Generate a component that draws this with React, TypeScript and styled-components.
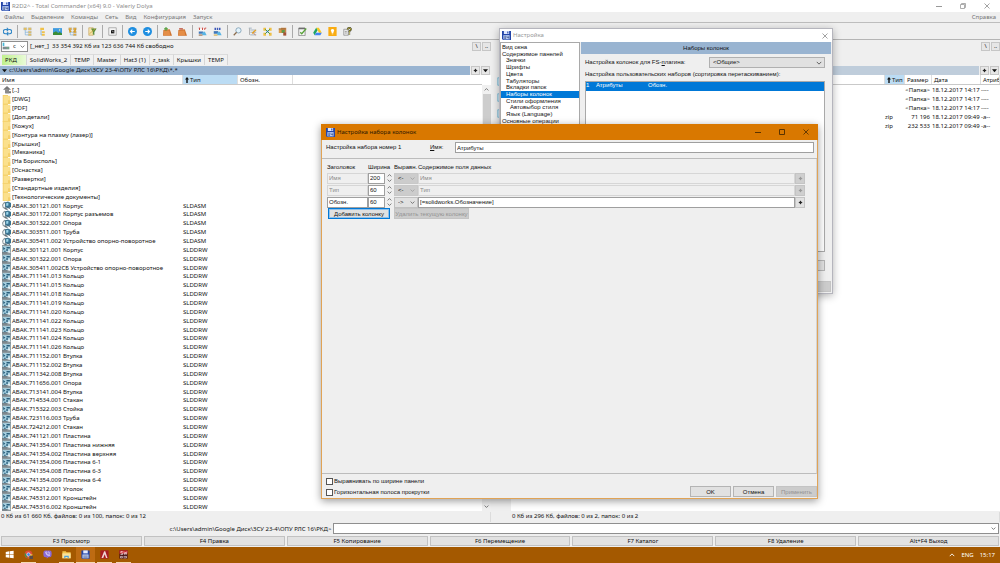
import React from "react";
import styled, { createGlobalStyle, css } from "styled-components";

const ui = `"Noto Sans", "Open Sans", sans-serif`;
const dlg = `"Liberation Sans", Arial, sans-serif`;

const GlobalStyle = createGlobalStyle`
  * { box-sizing: border-box; }
  html, body, #root { height: 100%; }
  body { margin: 0; background: #efefef; color: #111; font: 6px/8px ${ui}; overflow: hidden; }
  button, input, select { font: inherit; color: inherit; margin: 0; padding: 0; border-radius: 0; }
  svg { display: block; flex: none; }
  ul { list-style: none; margin: 0; padding: 0; }
`;

/* ---------- icons ---------- */

const Svg = ({ s = 10, children, vb = 12 }: { s?: number; vb?: number; children: React.ReactNode }) => (
  <svg width={s} height={s} viewBox={`0 0 ${vb} ${vb}`} fill="none" aria-hidden="true">{children}</svg>
);

const Floppy = ({ s = 9 }: { s?: number }) => (
  <Svg s={s}>
    <path d="M0 0H12V12H1.5L0 10.500Z" fill="#2446a8" />
    <path d="M2.500 0H9.500V4H2.500Z" fill="#dfe8ff" />
    <path d="M7 .7H8.500V3.300H7Z" fill="#2446a8" />
    <path d="M1.800 5.500H10.200V11.200H1.800Z" fill="#b9cdf5" />
    <path d="M3 7H5.300M3 8.500H5.300M3 10H5.300M6.500 7V8.500H9M9 7V10.200" stroke="#2c3f77" strokeWidth=".8" />
  </Svg>
);
const Chevron = ({ w = 6, c = "#555", up = false }: { w?: number; c?: string; up?: boolean }) => (
  <svg width={w} height={w} viewBox="0 0 8 8" fill="none" stroke={c} strokeWidth="1.2" aria-hidden="true">
    <path d={up ? "M1 5.500L4 2.500L7 5.500" : "M1 2.500L4 5.500L7 2.500"} />
  </svg>
);
const Triangle = () => (
  <svg width="5" height="5" viewBox="0 0 6 6" aria-hidden="true"><path d="M0 1.500H6L3 5Z" fill="#111" /></svg>
);
const Star = ({ c = "#222" }: { c?: string }) => (
  <svg width="5" height="5" viewBox="0 0 6 6" aria-hidden="true"><path d="M3 .5L4 2L5.500 3L4 4L3 5.500L2 4L.5 3L2 2Z" fill={c} /></svg>
);
const SortUp = () => (
  <svg width="4" height="6" viewBox="0 0 4 6" aria-hidden="true"><path d="M2 0L4 2.500H2.700V6H1.300V2.500H0Z" fill="#111" /></svg>
);
const CloseX = ({ c = "#999" }: { c?: string }) => (
  <Svg s={6} vb={6}><path d="M.5 .5L5.500 5.500M5.500 .5L.5 5.500" stroke={c} strokeWidth=".9" /></Svg>
);
const Minus = ({ c = "#999" }: { c?: string }) => (
  <Svg s={6} vb={6}><path d="M0 3.500H6" stroke={c} /></Svg>
);
const Square = ({ c = "#999" }: { c?: string }) => (
  <Svg s={6} vb={6}><path d="M.5 .5H5.500V5.500H.5Z" stroke={c} /></Svg>
);
const Restore = () => (
  <Svg s={6} vb={6}><path d="M.5 1.500H4.500V5.500H.5ZM1.500 1.500V.5H5.500V4.500H4.500" stroke="#999" strokeWidth=".8" /></Svg>
);

const UpDir = () => (
  <Svg s={8}><path d="M6 0L12 5.500H9V8H12V11H4V9H7V5.500H0Z" fill="#777" /><path d="M3 5H9V11H3Z" fill="#8b8b8b" /></Svg>
);
const Folder = () => (
  <Svg s={9}><path d="M1 0H8V1.500H11V12H1Z" fill="#f3ce66" /><path d="M2 1H10.500V11.500H2Z" fill="#fbe08c" /><path d="M8 7H11V12H8Z" fill="#f5cf68" /></Svg>
);
const Asm = () => (
  <Svg s={9}>
    <path d="M0 5L3 1L6 2V10L4 11L1 9Z" fill="#8d999e" />
    <path d="M1.500 5L4 2.500V8.500L2 8Z" fill="#f1f5f6" />
    <path d="M4 2L8 .5L12 2.500V8L8.500 10L4.500 8Z" fill="#3a7391" />
    <path d="M5.500 3L8.500 2.200V6L5.800 6.800Z" fill="#9bd4e8" />
    <path d="M3 9L7 10L8 11.700H5Z" fill="#5f6c72" />
    <path d="M8.500 8.500L11.500 11.500" stroke="#666" />
  </Svg>
);
const Drw = () => (
  <Svg s={9}>
    <path d="M0 0H12V12H0Z" fill="#8b979c" />
    <path d="M.8 1.500H11V9.500H.8Z" fill="#a9d3e3" />
    <path d="M1.300 2.500L4.500 4.500L2 7ZM6 2.500H10.500V4.500H6ZM5.500 5.500H8V7.500H5.500ZM2.500 7.500H5V9H2.500Z" fill="#2a5f7c" />
    <path d="M7.500 9.500L9.500 6.500L11.500 10.500Z" fill="#eef4f6" />
    <path d="M0 10.500H7" stroke="#59666c" />
  </Svg>
);

const Tree1 = ({ c = "#efc14a" }: { c?: string }) => (
  <>
    <path d="M1 1H5V4H1ZM7 1H11V4H7ZM7 5.500H11V8H7ZM7 9H11V11.500H7Z" fill={c} stroke="#a9b7c4" strokeWidth=".6" />
    <path d="M3 4V10.500H7M3 7H7" stroke="#6fa8d8" strokeWidth=".8" />
  </>
);
const toolIcons: Record<string, React.ReactNode> = {
  refresh: <path d="M4 9H3.300A2.900 2.900 0 0 1 3.300 3.200H6.500M8 3.200H8.700A2.900 2.900 0 0 1 8.700 9H5.500M5 1L7.200 3.200L5 5.400M7 6.800L4.800 9L7 11.200" stroke="#2f86c6" strokeWidth="1.400" />,
  brief: <Tree1 />,
  full: <><path d="M3 1H8V4H3ZM5 5.500H9V8H5ZM5 9H9V11.500H5Z" fill="#efc14a" /><path d="M4 4V10.500H5" stroke="#6fa8d8" /></>,
  thumbs: <><path d="M0 1.500H12V10.500H0Z" fill="#3f9be0" /><path d="M0 10.500V7.500L4 5.500L7 8L9 6.500L12 8.500V10.500Z" fill="#3c8d36" /><circle cx="8.800" cy="4" r="1" fill="#fff6a8" /></>,
  tree: <><Tree1 c="#e8a92e" /><path d="M1 2L5 6L2 8ZM11 1L7 6L10 7Z" fill="#d99b1c" /></>,
  filter: <><path d="M1 1H7V11H1Z" fill="#f4e3ac" stroke="#b3852a" strokeWidth=".6" /><path d="M4 2H11.500L8.500 6.500V11L6.500 9.500V6.500Z" fill="#5a8f3c" /><path d="M2 9L10 2" stroke="#c9a136" /></>,
  term: <><path d="M1 1H11V11H1Z" fill="#f4f4f4" stroke="#9a9a9a" /><path d="M4 4H8.500V8.500H4Z" fill="#1c1c1c" /><path d="M5 4.500L7.500 7" stroke="#fff" strokeWidth=".8" /></>,
  back: <><circle cx="6" cy="6" r="6" fill="#1e8ee0" /><path d="M9 6H3.500M5.700 3.500L3.300 6L5.700 8.500" stroke="#fff" strokeWidth="1.500" /></>,
  fwd: <><circle cx="6" cy="6" r="6" fill="#1e8ee0" /><path d="M3 6H8.500M6.300 3.500L8.700 6L6.300 8.500" stroke="#fff" strokeWidth="1.500" /></>,
  pack: <><path d="M.5 4L9 3L12 11.500H0Z" fill="#cf7430" /><path d="M1.500 5L8.500 4.500L9.500 11H.8Z" fill="#e58e47" /><path d="M4 0V5M1.500 2.500H6.500" stroke="#4b9b35" strokeWidth="1.400" /></>,
  unpack: <><path d="M.5 4L9 3L12 11.500H0Z" fill="#cf7430" /><path d="M1.500 5L8.500 4.500L9.500 11H.8Z" fill="#e58e47" /><path d="M1.500 2.500H6.500" stroke="#b8402a" strokeWidth="1.600" /></>,
  ftp: <><path d="M1 1H11V4.500H1Z" fill="#fff" /><path d="M1 1.500H3M2 1.500V4M5 1.500H7M6 1.500V4M9 4V1.500H11" stroke="#c43b32" strokeWidth="1.200" /><path d="M1 6H7V9H1Z" fill="#4177b8" /><path d="M5 8L9 6L11.500 11H6Z" fill="#58b4e4" /><path d="M1 10H6V11.500H1Z" fill="#8d6b4a" /></>,
  url: <><path d="M2 1H4V4H2ZM5 1H7V4H5ZM8 1H10V4H8Z" fill="#3d58b8" /><path d="M1 5.500H7V9H1Z" fill="#4177b8" /><path d="M5 8L9 6L11.500 11H6Z" fill="#58b4e4" /><path d="M1 10H6V11.500H1Z" fill="#d5ac43" /></>,
  search: <><circle cx="7.300" cy="4.500" r="3.500" fill="#e4f3fb" stroke="#7396ad" /><path d="M4.800 7L1 11" stroke="#8a6a4a" strokeWidth="1.600" /></>,
  rename: <><path d="M1 1.500H5M3 4H11M3 7H11M3 10.500H11" stroke="#8ea3b6" strokeWidth="1" /><path d="M2 2V10.500" stroke="#888" strokeWidth=".8" /><path d="M10.500 4L5.500 8.500" stroke="#e3a429" strokeWidth="1.800" /><path d="M7 8L10 10.500" stroke="#c95b30" /></>,
  sync: <><path d="M.5 1H4V5H.5ZM8 1H11.500V5H8ZM.5 7.500H4V11.500H.5ZM8 7.500H11.500V11.500H8Z" fill="#eec047" /><path d="M3 3L9 9M9 3L3 9" stroke="#3a9a47" strokeWidth="1.300" /><path d="M5 5H7V7H5Z" fill="#3372b8" /></>,
  compare: <><path d="M1 2H8V8H1Z" fill="#d99c4c" /><path d="M4 1H11V7H4Z" fill="#c9854a" /><path d="M5 4H9V8H5Z" fill="#5f9c48" /><path d="M7 7H11V11.500H7Z" fill="#a35235" /><path d="M1 2.500H10" stroke="#8c6532" /></>,
  notepad: <><path d="M1 1.500H9.500V11.500H1Z" fill="#f5f5f5" stroke="#707070" strokeWidth=".9" /><path d="M1 1H9.500V3H1Z" fill="#6d6d6d" /><path d="M3 7L5 9L11 2" stroke="#58a238" strokeWidth="1.700" /></>,
  drive: <><path d="M4.200 1H7.800L11.700 7.500H8Z" fill="#f9c921" /><path d="M4.200 1L6 4.200L2.200 11L.3 7.500Z" fill="#1fa463" /><path d="M4.200 7.500H11.700L9.800 11H2.200Z" fill="#4285f4" /></>,
  keep: <><path d="M.5 0H11.500V12H.5Z" fill="#f9ac12" /><path d="M6 2.500A2.300 2.300 0 0 1 7.200 6.700V8H4.800V6.700A2.300 2.300 0 0 1 6 2.500ZM5 8.700H7V9.500H5Z" fill="#fff" /></>,
  help: <><path d="M1 3H7V11H1Z" fill="#eaeaea" stroke="#777" strokeWidth=".8" /><path d="M2.500 6H5M2.500 8H5" stroke="#777" strokeWidth=".8" /><path d="M6 3.500Q6.500 1 8.500 1.200Q11 1.600 10.500 3.600Q9.500 5 8.500 5.700V7.200M8.500 8.500V10" stroke="#2a2a1a" strokeWidth="2.200" /><path d="M6 3.500Q6.500 1 8.500 1.200Q11 1.600 10.500 3.600Q9.500 5 8.500 5.700V7.200M8.500 8.500V10" stroke="#f1e24a" strokeWidth="1" /></>,
  doc: <path d="M1 1H11V11H1Z" fill="#cfe9f5" stroke="#6fb7d6" />,
};
const toolbar = ["refresh", "|", "brief", "full", "thumbs", "tree", "|", "filter", "|", "term", "|", "back", "fwd", "|", "pack", "unpack", "|", "ftp", "url", "|", "search", "rename", "sync", "compare", "|", "notepad", "drive", "keep", "help"];

/* ---------- main window ---------- */

const Desktop = styled.div`
  height: 100vh; display: flex; flex-direction: column; position: relative; overflow: hidden;
`;
const TitleBar = styled.header`
  display: flex; align-items: center; gap: 2px; height: 12px; padding: 0 10px 0 1px;
  background: #fff; color: #8c8c8c;
`;
const Grow = styled.div`flex: 1;`;
const WinButtons = styled.div<{ $gap: number }>`display: flex; gap: ${(p) => p.$gap}px;`;
const IconButton = styled.button`
  border: 0; background: none; display: grid; place-items: center;
`;
const MenuBar = styled.nav`
  display: flex; align-items: center; gap: 7px; height: 11px; padding: 0 4px; color: #777;
  border-bottom: 1px solid #bdbdbd;
`;
const MenuItem = styled.button`border: 0; background: none;`;
const ToolBar = styled.div`
  display: flex; align-items: center; height: 17px; border-bottom: 1px solid #b4b4b4;
`;
const ToolButton = styled(IconButton)`width: 15px; height: 15px;`;
const ToolSep = styled.span`width: 5px; height: 13px; display: flex; justify-content: center; &::before { content: ""; width: 1px; background: #aaa; }`;

const Panels = styled.main`
  flex: 1; min-height: 0; display: grid; grid-template-columns: minmax(0, 491fr) 20px minmax(0, 489fr);
`;
const Panel = styled.section`display: flex; flex-direction: column; min-width: 0; min-height: 0;`;
const DriveBar = styled.div`display: flex; align-items: center; height: 12px; padding: 0 0 0 1px; gap: 1px; span { margin-left: 1px; }`;
const SelectWrap = styled.div<{ $w?: number; $bg?: string; $b?: string }>`
  position: relative; display: flex; align-items: center; background: ${(p) => p.$bg ?? "#fff"};
  border: 1px solid ${(p) => p.$b ?? "#8f8f8f"}; ${(p) => p.$w && `width: ${p.$w}px;`}
  > svg:last-child { position: absolute; right: 2px; pointer-events: none; }
`;
const Select = styled.select`
  appearance: none; border: 0; background: none; flex: 1; min-width: 0; height: 9px; padding: 0 3px; outline: 0; opacity: 1;
`;
const Mini = styled.button`
  width: 9px; height: 9px; border: 1px solid #c6c6c6; background: #e6e6e6; display: grid; place-items: center;
  line-height: 6px; overflow: hidden;
`;
const Tabs = styled.div`display: flex; height: 13px; padding: 2px 0 0 2px;`;
const Tab = styled.button<{ $on?: boolean }>`
  border: 0; border-right: 1px solid #d6d6d6; border-top: 1px solid #dcdcdc; padding: 0 3px; background: #f1f1f1;
  ${(p) => p.$on && css`background: linear-gradient(90deg, #c0f08c, #e9fbd8); padding: 0 9px 0 3px;`}
`;
const PathRow = styled.div`display: flex; align-items: center; gap: 1px; height: 10px; padding-right: 1px;`;
const Path = styled.div<{ $on?: boolean }>`
  flex: 1; display: flex; align-items: center; gap: 2px; height: 9px; padding-left: 2px; white-space: pre;
  background: ${(p) => (p.$on ? "#99b4d1" : "#bfcddb")};
`;
const ListArea = styled.div`flex: 1; min-height: 0; display: flex; background: #fff;`;
const FileTable = styled.table<{ $cols: string }>`
  flex: 1; min-width: 0; display: flex; flex-direction: column;
  tr { display: grid; grid-template-columns: ${(p) => p.$cols}; align-items: center; min-height: 0; }
  thead tr { height: 10px; border-bottom: 1px solid #c9c9c9; align-items: stretch; }
  tbody { flex: 1; min-height: 0; display: grid; grid-template-rows: repeat(48, minmax(0, 1fr)); padding-top: 1px; }
  td { padding: 0; white-space: nowrap; }
`;
const Th = styled.th<{ $sort?: boolean }>`
  display: flex; align-items: center; gap: 1px; padding: 0 0 0 2px; font-weight: 400; text-align: left;
  border-right: 1px solid #dedede; overflow: hidden;
  ${(p) => p.$sort && `background: #bbdcf4;`}
`;
const NameCell = styled.td`&& { display: flex; align-items: center; gap: 1px; padding-left: 2px; }`;
const IconSlot = styled.span`width: 9px; display: grid; place-items: center;`;
const NumCell = styled.td`&& { text-align: right; padding-right: 2px; }`;
const Scroll = styled.div`
  width: 9px; margin-top: 10px; background: #f0f0f0; display: flex; flex-direction: column; align-items: center;
  &::before { content: ""; order: 1; width: 8px; height: 42%; background: #cdcdcd; }
  > :last-child { order: 2; margin-top: auto; }
  > * { height: 9px; }
`;
const Status = styled.div`height: 10px; padding-left: 1px; margin-top: 1px; border-right: 1px solid #dcdcdc;`;
const MidBar = styled.div`display: flex; flex-direction: column; align-items: center; gap: 7px; padding-top: 37px;`;

const Command = styled.label`
  display: grid; grid-template-columns: minmax(0, 332fr) minmax(0, 667fr); gap: 2px; align-items: center; padding-right: 1px;
  margin: 1px 0 2px; height: 11px; text-align: right;
`;
const CmdBox = styled(SelectWrap)`height: 11px;`;
const CmdInput = styled.input`border: 0; background: none; outline: 0; width: 100%; height: 8px;`;
const FKeys = styled.div`display: grid; grid-template-columns: repeat(7, minmax(0, 1fr)); gap: 2px; padding: 0 1px 1px;`;
const FKey = styled.button`height: 10px; border: 1px solid #c2c2c2; background: #e2e2e2;`;

const TaskBar = styled.footer`display: flex; height: 16px; background: #a45900; color: #fff; align-items: stretch;`;
const Task = styled.button<{ $state?: "run" | "active" }>`
  width: ${(p) => (p.$state === "active" ? 19 : 15)}px; margin: 0 ${(p) => (p.$state === "active" ? 0 : 2)}px;
  border: 0; background: none; display: grid; place-items: center; border-bottom: 1px solid transparent;
  ${(p) => p.$state && `border-bottom-color: #f3d9b5;`}
  ${(p) => p.$state === "active" && `background: #bd6b12;`}
`;
const Tray = styled.div`display: flex; align-items: center; gap: 6px; padding-right: 5px;`;

/* ---------- dialogs ---------- */

const Window = styled.div<{ $x: number; $y: number; $w: number; $h: number; $accent?: boolean }>`
  position: absolute; left: ${(p) => p.$x}px; top: ${(p) => p.$y}px; width: ${(p) => p.$w}px; height: ${(p) => p.$h}px;
  display: flex; flex-direction: column; background: #efefef; font-family: ${dlg}; line-height: 7px;
  border: 1px solid ${(p) => (p.$accent ? "#e0a356" : "#b5b5bd")};
  box-shadow: 0 2px 8px rgba(0, 0, 0, ${(p) => (p.$accent ? 0.4 : 0.3)});
`;
const WindowTitle = styled.div<{ $accent?: boolean }>`
  display: flex; align-items: center; gap: 2px; font-family: ${ui};
  ${(p) => p.$accent
    ? css`height: 16px; margin: -1px -1px 0; padding: 0 9px 0 5px; background: #d97800; color: #2b1800;`
    : css`height: 13px; padding: 0 4px 0 2px; background: #fff; color: #999;`}
`;
const Split = styled.div`flex: 1; min-height: 0; display: grid; grid-template-columns: 80px minmax(0, 1fr); gap: 1px; padding-right: 1px;`;
const TreeBox = styled.ul`
  background: #fff; border: 1px solid #a9a9a9; display: grid; grid-template-rows: repeat(37, minmax(0, 1fr));
  overflow: hidden; white-space: nowrap; padding-top: 1px;
`;
const TreeItem = styled.li<{ $lvl: number; $on?: boolean }>`
  padding-left: ${(p) => 1 + p.$lvl * 4}px;
  ${(p) => p.$on && `background: #0078d7; color: #fff;`}
`;
const Page = styled.div`display: flex; flex-direction: column; min-height: 0;`;
const PageTitle = styled.div`height: 12px; background: #99b4d1; display: grid; place-items: center; margin-bottom: 3px;`;
const PageBody = styled.div`flex: 1; display: flex; flex-direction: column; padding: 0 6px 0 4px; min-height: 0;`;
const Pair = styled.div`display: grid; grid-template-columns: 124px minmax(0, 1fr); align-items: center; margin-bottom: 2px;`;
const Note = styled.div`height: 11px; padding-top: 1px;`;
const ListBox = styled.ul`background: #fff; border: 1px solid #a9a9a9; height: 171px;`;
const ListRow = styled.li`
  display: grid; grid-template-columns: 10px 52px 1fr; height: 9px; background: #0078d7; color: #fff;
`;
const Buttons = styled.div`display: flex; justify-content: flex-end; gap: 2px;`;
const Button = styled.button<{ $w: number; $focus?: boolean }>`
  width: ${(p) => p.$w}px; height: 11px; line-height: 8px; border: 1px solid ${(p) => (p.$focus ? "#0078d7" : "#b4b4b4")}; background: #e1e1e1;
  ${(p) => p.$focus && `box-shadow: inset 0 0 0 1px #8fc0ea;`}
  &:disabled { background: #cccccc; border-color: #c4c4c4; color: #929292; }
`;
const PageFoot = styled(Buttons)`margin: 5px 6px 10px 0;`;
const DialogFoot = styled(Buttons)`padding-bottom: 1px;`;

const NameRow = styled.div`
  display: grid; grid-template-columns: 72px 32px 25px minmax(0, 1fr); align-items: center; padding: 2px 3px 5px 4px;
  border-bottom: 1px solid #bcbcbc; white-space: nowrap;
`;
const Field = styled.input`
  width: 100%; height: 11px; border: 1px solid #9f9f9f; background: #fff; padding: 0 1px; outline: 0; min-width: 0;
  &:disabled { background: #efefef; border-color: #d6d6d6; color: #8a8a8a; }
`;
const Editor = styled.div`flex: 1; padding: 4px 11px 0 5px; border-bottom: 1px solid #bcbcbc; border-right: 1px solid #d4d4d4;`;
const EditRow = styled.div`
  display: grid; grid-template-columns: 41px 17px 9px 24px minmax(0, 1fr) 10px; align-items: center; height: 12px;
`;
const EditHead = styled(EditRow)`height: 9px; white-space: nowrap;`;
const Spin = styled.div`display: flex; flex-direction: column; align-items: center; button { height: 5px; }`;
const Pick = styled.button`
  height: 11px; border: 1px solid #c4c4c4; background: #e1e1e1; display: grid; place-items: center;
  &:disabled { background: #cfcfcf; }
`;
const EditActions = styled.div`display: flex; gap: 4px; padding: 0 0 0 1px;`;
const Foot = styled.div`display: flex; justify-content: space-between; align-items: flex-end; height: 24px; padding: 0 0 1px 4px;`;
const Checks = styled.div`display: flex; flex-direction: column; gap: 3px; padding-bottom: 1px;`;
const Check = styled.label`display: flex; align-items: center; gap: 1px; height: 8px;`;
const CheckBox = styled.input`appearance: none; width: 7px; height: 7px; border: 1px solid #555; background: #fff;`;

/* ---------- data ---------- */

const folders = ["DWG", "PDF", "Доп.детали", "Кожух", "Контура на плазму (лазер)", "Крышки", "Механика", "На Борисполь", "Оснастка", "Развертки", "Стандартные изделия", "Технологические документы"];
const asm = ["301121.001 Корпус", "301172.001 Корпус разъемов", "301322.001 Опора", "303511.001 Труба", "305411.002 Устройство опорно-поворотное"];
const drw = ["301121.001 Корпус", "301322.001 Опора", "305411.002СБ Устройство опорно-поворотное",
  ...["013", "015", "018", "019", "020", "022", "023", "024", "026"].map((n) => `711141.${n} Кольцо`),
  "711152.001 Втулка", "711152.002 Втулка", "711342.008 Втулка", "711656.001 Опора", "713141.004 Втулка", "714534.001 Стакан",
  "715322.003 Стойка", "723116.003 Труба", "724212.001 Стакан", "741121.001 Пластина", "741354.001 Пластина нижняя",
  "741354.002 Пластина верхняя", "741354.006 Пластина 6-1", "741354.008 Пластина 6-3", "741354.009 Пластина 6-4",
  "745212.001 Уголок", "745312.001 Кронштейн", "745316.002 Кронштейн"];
const files: [React.ReactNode, string, string][] = [
  [<UpDir />, "[..]", ""],
  ...folders.map((f): [React.ReactNode, string, string] => [<Folder />, `[${f}]`, ""]),
  ...asm.map((f): [React.ReactNode, string, string] => [<Asm />, `ABAK.${f}`, "SLDASM"]),
  ...drw.map((f): [React.ReactNode, string, string] => [<Drw />, `ABAK.${f}`, "SLDDRW"]),
];
const rightRows = [
  ["", "<Папка>", "18.12.2017 14:17", "----"],
  ["", "<Папка>", "18.12.2017 14:17", "----"],
  ["", "<Папка>", "18.12.2017 14:17", "----"],
  ["zip", "71 196", "18.12.2017 09:49", "-a--"],
  ["zip", "232 533", "18.12.2017 09:49", "-a--"],
];
const tree: [string, number][] = [["Вид окна", 0], ["Содержимое панелей", 0], ["Значки", 1], ["Шрифты", 1], ["Цвета", 1], ["Табуляторы", 1], ["Вкладки папок", 1], ["Наборы колонок", 1], ["Стили оформления", 1], ["Автовыбор стиля", 2], ["Язык (Language)", 1], ["Основные операции", 0]];
const columns = [
  { title: "Имя", width: "200", content: "Имя", off: true },
  { title: "Тип", width: "60", content: "Тип", off: true },
  { title: "Обозн.", width: "60", content: "[=solidworks.Обозначение]", off: false },
];

const tasks: [string, React.ReactNode, ("run" | "active")?][] = [
  ["Пуск", <path d="M1 2.500L5.500 1.800V5.700H1ZM6.200 1.700L11.500 1V5.700H6.200ZM1 6.300H5.500V10.200L1 9.500ZM6.200 6.300H11.500V11L6.200 10.300Z" fill="#fff" />],
  ["Chrome", <><circle cx="6" cy="6" r="5.200" fill="#dd4b3a" /><path d="M1.500 3.500L5 10.800A5.200 5.200 0 0 1 1.500 3.500Z" fill="#2ba24c" /><path d="M6 11.200L9 5.500H11.200A5.200 5.200 0 0 1 6 11.200Z" fill="#f7c52c" /><circle cx="6" cy="6" r="2.300" fill="#3f80e8" stroke="#fff" strokeWidth=".8" /><path d="M7 7.500H12V12H7Z" fill="#5a4b48" /></>, "run"],
  ["Viber", <><path d="M3 .5H9Q11.500 .5 11.500 3.500V6.500Q11.500 9.500 8.500 9.500H7L5 11.800V9.500H3.500Q.5 9.500 .5 6.500V3.500Q.5 .5 3 .5Z" fill="#8868d8" /><path d="M3.500 2.800Q3.500 6.500 8 8L9 6.500L7.300 5.600L6.500 6.300L5 4.600L5.300 3.500L4.500 2.300ZM6.500 2.300Q8.800 2.500 9 5" stroke="#fff" strokeWidth=".8" /></>],
  ["Проводник", <><path d="M.5 1.500H5L6 3H11.500V11H.5Z" fill="#f5c64f" /><path d="M.5 4.500H11.500V11H.5Z" fill="#fce39a" /><path d="M3 7.500H9V11H7.500V9.200H4.500V11H3Z" fill="#4ba3dc" /></>, "run"],
  ["Total Commander", <><path d="M.5 .5H11.500V11.500H1.500L.5 10.500Z" fill="#2446a8" /><path d="M3 .5H9V4.500H3Z" fill="#e3eaff" /><path d="M2 6H10V11H2Z" fill="#cfdcfa" /><path d="M3 8H9M3 9.700H9" stroke="#2c3f77" strokeWidth=".8" /></>, "active"],
  ["AutoCAD", <><path d="M.5 .5H11.500V11.500H.5Z" fill="#a81c24" /><path d="M2 10.500L5.500 1.500H7L10 10.500H8L6.300 5.500L4.300 10.500Z" fill="#f0d4d4" /></>, "run"],
  ["SolidWorks", <><path d="M.5 .5H11.500V11.500H.5Z" fill="#451013" /><path d="M.5 .5H11.500V5H.5Z" fill="#c9262c" /><path d="M5 2H2.500V4H5V6H2M6.500 2L7.500 6L8.500 3L9.500 6L10.500 2M2 8.500H4.500V10.500H2ZM6 8.500H10V10.500H6" stroke="#f4e5e5" strokeWidth=".9" /></>, "run"],
];

const PanelDrive = ({ children }: { children?: React.ReactNode }) => (
  <DriveBar>{children}<Grow /><Mini aria-label="Корневой каталог">\</Mini><Mini aria-label="Каталог выше">..</Mini></DriveBar>
);
const PathBar = ({ on, path }: { on?: boolean; path: string }) => (
  <PathRow><Path $on={on}>{on && <Triangle />}{path}</Path><Mini aria-label="Избранное"><Star /></Mini><Mini aria-label="История"><Triangle /></Mini></PathRow>
);

export default function App() {
  return (
    <Desktop>
      <GlobalStyle />
      <TitleBar>
        <Floppy />R2D2^ - Total Commander (x64) 9.0 - Valeriy Dolya<Grow />
        <WinButtons $gap={18}>
          <IconButton aria-label="Свернуть"><Minus /></IconButton>
          <IconButton aria-label="Восстановить"><Restore /></IconButton>
          <IconButton aria-label="Закрыть"><CloseX /></IconButton>
        </WinButtons>
      </TitleBar>
      <MenuBar>
        {["Файлы", "Выделение", "Команды", "Сеть", "Вид", "Конфигурация", "Запуск"].map((m) => <MenuItem key={m}>{m}</MenuItem>)}
        <Grow /><MenuItem>Справка</MenuItem>
      </MenuBar>
      <ToolBar>
        {toolbar.map((t, i) => t === "|" ? <ToolSep key={i} /> : <ToolButton key={i} aria-label={t}><Svg s={9}>{toolIcons[t]}</Svg></ToolButton>)}
      </ToolBar>

      <Panels>
        <Panel>
          <PanelDrive>
            <SelectWrap $w={27}>
              <svg width="8" height="8" viewBox="0 0 12 12" aria-hidden="true"><path d="M1 7H11V11H1Z" fill="#7d8a90" /><path d="M1 1H3.500V6H1Z" fill="#49b8d8" /><path d="M7 8.500H10V9.500H7Z" fill="#5ee07c" /></svg>
              <Select aria-label="Диск"><option>c</option></Select><Chevron w={5} />
            </SelectWrap>
            <span>[_нет_]&nbsp; 33 354 392 Кб из 123 636 744 Кб свободно</span>
          </PanelDrive>
          <Tabs>
            {["РКД", "SolidWorks_2", "TEMP", "Master", "Hat3 (1)", "z_task", "Крышки", "TEMP"].map((t, i) => <Tab key={i} $on={i === 0}>{t}</Tab>)}
          </Tabs>
          <PathBar on path={"c:\\Users\\admin\\Google Диск\\ЗСУ 23-4\\ОПУ РЛС 16\\РКД\\*.*"} />
          <ListArea>
            <FileTable $cols="183px 55px 55px minmax(0, 1fr)">
              <thead><tr><Th>Имя</Th><Th $sort><SortUp />Тип</Th><Th>Обозн.</Th><th aria-hidden="true" /></tr></thead>
              <tbody>
                {files.map(([icon, name, type], i) => (
                  <tr key={i}><NameCell><IconSlot>{icon}</IconSlot>{name}</NameCell><td>{type}</td></tr>
                ))}
              </tbody>
            </FileTable>
            <Scroll><IconButton aria-label="Вверх"><Chevron up w={5} /></IconButton><IconButton aria-label="Вниз"><Chevron w={5} /></IconButton></Scroll>
          </ListArea>
          <Status>0 Кб из 61 660 Кб, файлов: 0 из 100, папок: 0 из 12</Status>
        </Panel>
        <MidBar>
          {["copy", "view", "edit"].map((b) => <IconButton key={b} aria-label={b}><Svg s={9}>{toolIcons.doc}</Svg></IconButton>)}
        </MidBar>
        <Panel>
          <PanelDrive />
          <Tabs />
          <PathBar path="" />
          <ListArea>
            <FileTable $cols="minmax(0, 1fr) 20px 27px 49px 19px">
              <thead><tr><Th aria-hidden="true" /><Th $sort><SortUp />Тип</Th><Th>Размер</Th><Th>Дата</Th><Th>Атриб</Th></tr></thead>
              <tbody>
                {rightRows.map((r, i) => (
                  <tr key={i}><td /><td>{r[0]}</td><NumCell>{r[1]}</NumCell><td>{r[2]}</td><td>{r[3]}</td></tr>
                ))}
              </tbody>
            </FileTable>
          </ListArea>
          <Status>0 Кб из 296 Кб, файлов: 0 из 2, папок: 0 из 2</Status>
        </Panel>
      </Panels>

      <Command>
        <span>{"c:\\Users\\admin\\Google Диск\\ЗСУ 23-4\\ОПУ РЛС 16\\РКД>"}</span>
        <CmdBox><CmdInput /><Chevron w={5} /></CmdBox>
      </Command>
      <FKeys>
        {["F3 Просмотр", "F4 Правка", "F5 Копирование", "F6 Перемещение", "F7 Каталог", "F8 Удаление", "Alt+F4 Выход"].map((k) => <FKey key={k}>{k}</FKey>)}
      </FKeys>
      <TaskBar>
        {tasks.map(([name, icon, state]) => <Task key={name} $state={state} aria-label={name}><Svg s={9}>{icon}</Svg></Task>)}
        <Grow />
        <Tray><Chevron up c="#fff" w={6} /><span>ENG</span><span>15:17</span></Tray>
      </TaskBar>

      <Window $x={499} $y={28} $w={334} $h={266} role="dialog" aria-label="Настройка">
        <WindowTitle><Floppy />Настройка<Grow /><IconButton aria-label="Закрыть"><CloseX /></IconButton></WindowTitle>
        <Split>
          <TreeBox>{tree.map(([t, l]) => <TreeItem key={t} $lvl={l} $on={t === "Наборы колонок"}>{t}</TreeItem>)}</TreeBox>
          <Page>
            <PageTitle>Наборы колонок</PageTitle>
            <PageBody>
              <Pair>
                <label htmlFor="fs">Настройка колонок для FS-<u>п</u>лагина:</label>
                <SelectWrap $bg="#e1e1e1" $b="#b0b0b0"><Select id="fs"><option>&lt;Общие&gt;</option></Select><Chevron /></SelectWrap>
              </Pair>
              <Note>Настройка пользовательских наборов (сортировка перетаскиванием):</Note>
              <ListBox><ListRow><span>1</span><span>Атрибуты</span><span>Обозн.</span></ListRow></ListBox>
            </PageBody>
            <PageFoot><Button $w={41} aria-label="Изменить" /></PageFoot>
            <DialogFoot><Button $w={41} disabled aria-label="Применить" /></DialogFoot>
          </Page>
        </Split>
      </Window>

      <Window $accent $x={321} $y={124} $w={497} $h={375} role="dialog" aria-label="Настройка набора колонок">
        <WindowTitle $accent>
          <Floppy />Настройка набора колонок<Grow />
          <WinButtons $gap={18}>
            <IconButton aria-label="Свернуть"><Minus c="#5a3300" /></IconButton>
            <IconButton aria-label="Развернуть"><Square c="#5a3300" /></IconButton>
            <IconButton aria-label="Закрыть"><CloseX c="#5a3300" /></IconButton>
          </WinButtons>
        </WindowTitle>
        <NameRow>
          <span>Настройка набора номер</span><span>1</span>
          <label htmlFor="set-name"><u>И</u>мя:</label><Field id="set-name" defaultValue="Атрибуты" />
        </NameRow>
        <Editor>
          <EditHead><span>Заголовок</span><span>Ширина</span><span /><span>Выравн.</span><span>Содержимое поля данных</span></EditHead>
          {columns.map((c) => (
            <EditRow key={c.title}>
              <Field aria-label="Заголовок" defaultValue={c.title} disabled={c.off} />
              <Field aria-label="Ширина" defaultValue={c.width} />
              <Spin><IconButton aria-label="Больше"><Chevron up w={5} /></IconButton><IconButton aria-label="Меньше"><Chevron w={5} /></IconButton></Spin>
              <SelectWrap $bg={c.off ? "#cccccc" : "#e1e1e1"} $b={c.off ? "#c8c8c8" : "#c0c0c0"}>
                <Select aria-label="Выравнивание" disabled={c.off}><option>{c.off ? "<-" : "->"}</option></Select><Chevron w={5} c={c.off ? "#999" : "#555"} />
              </SelectWrap>
              <Field aria-label="Содержимое" defaultValue={c.content} disabled={c.off} />
              <Pick aria-label="Добавить поле" disabled={c.off}><Star c={c.off ? "#999" : "#222"} /></Pick>
            </EditRow>
          ))}
          <EditActions><Button $w={62} $focus>Добавить колонку</Button><Button $w={75} disabled>Удалить текущую колонку</Button></EditActions>
        </Editor>
        <Foot>
          <Checks>
            <Check><CheckBox type="checkbox" />Выравнивать по ширине панели</Check>
            <Check><CheckBox type="checkbox" />Горизонтальная полоса прокрутки</Check>
          </Checks>
          <Buttons><Button $w={41}>OK</Button><Button $w={41}>Отмена</Button><Button $w={41} disabled>Применить</Button></Buttons>
        </Foot>
      </Window>
    </Desktop>
  );
}
